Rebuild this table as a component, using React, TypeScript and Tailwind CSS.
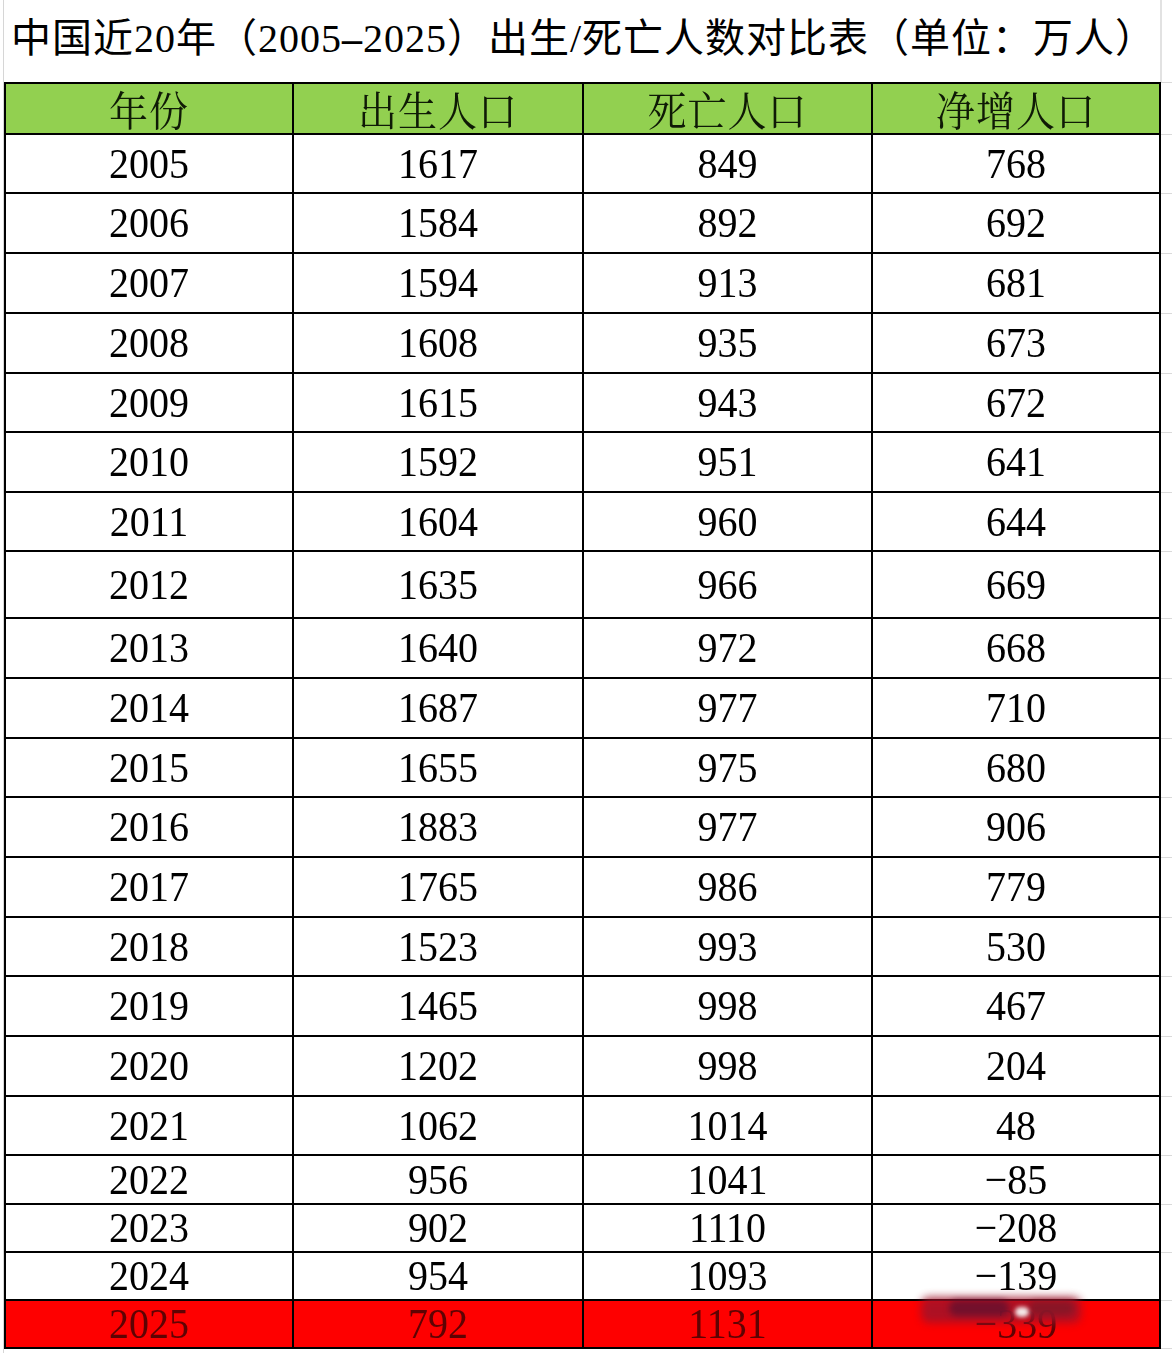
import React from "react";

type Row = { y: string; b: string; d: string; n: string; h: string; red?: boolean };

const rows: Row[] = [
  { y: "2005", b: "1617", d: "849", n: "768", h: "h-[59px]" },
  { y: "2006", b: "1584", d: "892", n: "692", h: "h-[60px]" },
  { y: "2007", b: "1594", d: "913", n: "681", h: "h-[60px]" },
  { y: "2008", b: "1608", d: "935", n: "673", h: "h-[60px]" },
  { y: "2009", b: "1615", d: "943", n: "672", h: "h-[59px]" },
  { y: "2010", b: "1592", d: "951", n: "641", h: "h-[60px]" },
  { y: "2011", b: "1604", d: "960", n: "644", h: "h-[59px]" },
  { y: "2012", b: "1635", d: "966", n: "669", h: "h-[67px]" },
  { y: "2013", b: "1640", d: "972", n: "668", h: "h-[60px]" },
  { y: "2014", b: "1687", d: "977", n: "710", h: "h-[60px]" },
  { y: "2015", b: "1655", d: "975", n: "680", h: "h-[59px]" },
  { y: "2016", b: "1883", d: "977", n: "906", h: "h-[60px]" },
  { y: "2017", b: "1765", d: "986", n: "779", h: "h-[60px]" },
  { y: "2018", b: "1523", d: "993", n: "530", h: "h-[59px]" },
  { y: "2019", b: "1465", d: "998", n: "467", h: "h-[60px]" },
  { y: "2020", b: "1202", d: "998", n: "204", h: "h-[60px]" },
  { y: "2021", b: "1062", d: "1014", n: "48", h: "h-[59px]" },
  { y: "2022", b: "956", d: "1041", n: "\u221285", h: "h-[49px]" },
  { y: "2023", b: "902", d: "1110", n: "\u2212208", h: "h-[48px]" },
  { y: "2024", b: "954", d: "1093", n: "\u2212139", h: "h-[48px]" },
  { y: "2025", b: "792", d: "1131", n: "\u2212339", h: "h-[48px]", red: true },
];

const widths = ["w-[290px] border-l-2", "w-[290px]", "w-[289px]", "w-[288px]"];

function Cell({ text, idx, red, header }: { text: string; idx: number; red?: boolean; header?: boolean }) {
  return (
    <div
      className={`${widths[idx]} shrink-0 flex items-center justify-center border-r-2 border-b-2 border-black ${
        header ? "border-t-2 bg-[#92d050]" : red ? "bg-[#fe0000]" : "bg-white"
      }`}
    >
      {header ? (
        <span className="inline-block scale-y-[1.05] text-[39px] leading-none text-[#0f1a06] font-['Noto_Serif_CJK_SC','Noto_Sans_CJK_SC',serif] font-normal tracking-[1px]">
          {text}
        </span>
      ) : (
        <span
          className={`inline-block scale-y-[1.08] text-[40px] leading-none font-['Liberation_Serif',serif] ${
            red ? "text-[#5e0303]" : "text-black"
          }`}
        >
          {text}
        </span>
      )}
    </div>
  );
}

export default function App() {
  return (
    <div className="w-[1172px] h-[1353px] bg-white overflow-hidden pl-[3px]">
      <div className="h-full border-l border-[#d6d6d6] flex flex-col">
        <div className="h-[82px] w-[1158px] border-r-2 border-[#e2e2e2] flex items-center pl-[7px] pb-[5px]">
          <span className="text-[40px] leading-none whitespace-nowrap tracking-[1px] text-black font-['Liberation_Serif','Noto_Sans_CJK_SC',sans-serif]">
            中国近20年（2005<span className="font-bold">–</span>2025）出生/死亡人数对比表（单位：万人）
          </span>
        </div>
        <div className="flex h-[53px]">
          {["年份", "出生人口", "死亡人口", "净增人口"].map((t, i) => (
            <Cell key={t} text={t} idx={i} header />
          ))}
          <div className="flex-1 border-t border-b border-[#dadada]" />
        </div>
        {rows.map((r) => (
          <div key={r.y} className={`flex ${r.h} relative`}>
            <Cell text={r.y} idx={0} red={r.red} />
            <Cell text={r.b} idx={1} red={r.red} />
            <Cell text={r.d} idx={2} red={r.red} />
            <Cell text={r.n} idx={3} red={r.red} />
            <div className="flex-1 border-b border-[#dadada]" />
            {r.red && (
              <div className="absolute left-[915px] top-[-4px] w-[165px] h-[30px] pointer-events-none">
                <div className="absolute left-[2px] top-0 w-[160px] h-[26px] rounded-[8px] bg-[#a0132a] blur-[4px] opacity-85" />
                <div className="absolute left-[30px] top-[3px] w-[60px] h-[16px] rounded-full bg-[#5a1030] blur-[3px] opacity-70" />
                <div className="absolute left-[110px] top-[4px] w-[45px] h-[14px] rounded-full bg-[#7a1828] blur-[3px] opacity-70" />
                <div className="absolute left-[96px] top-[10px] w-[14px] h-[10px] rounded-full bg-[#f4e8e8] blur-[2px]" />
              </div>
            )}
          </div>
        ))}
      </div>
    </div>
  );
}
